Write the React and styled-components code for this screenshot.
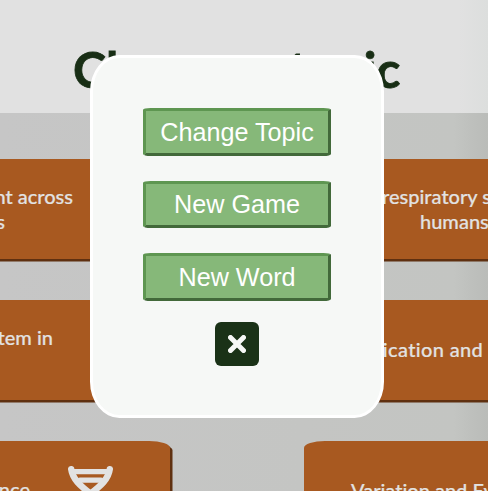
import React from 'react';
import styled, { createGlobalStyle } from 'styled-components';

const GlobalStyle = createGlobalStyle`
  * { box-sizing: border-box; }
  body { margin: 0; overflow: hidden; }
`;

const Page = styled.div`
  height: 491px;
  overflow: hidden;
  font-family: Lato, 'Open Sans', sans-serif;
  font-variant-ligatures: none;
  background: linear-gradient(90deg, #c6c6c6 0%, #c4c5c3 62%, #c3c5c2 93%, #bcbebb 98%, #babcb9 100%);
`;

const Header = styled.header`
  height: 113px;
  padding-top: 39px;
  padding-left: 73px;
  background: linear-gradient(90deg, #e1e1e1 0%, #e1e1e1 94%, #dcdedd 100%);
`;

const Title = styled.h1`
  margin: 0;
  color: #182e15;
  font-size: 50px;
  line-height: 60px;
  font-weight: 700;
  letter-spacing: -0.15px;
  white-space: nowrap;
  -webkit-text-stroke: 0.8px #182e15;
`;

const Topics = styled.main`
  display: grid;
  grid-template-columns: 300px 300px;
  grid-auto-rows: 100px;
  gap: 41px 134px;
  margin: 46px 0 0 -130px;
`;

const Topic = styled.article`
  display: flex;
  flex-direction: column;
  align-items: ${({ $side }) => ($side === 'left' ? 'flex-end' : 'flex-start')};
  padding-top: ${({ $top }) => $top}px;
  background: #a85920;
  border-radius: 7%;
  box-shadow: 2.5px 2.5px 0 #5f3010;
  color: #e2e2e2;
`;

const Line = styled.span`
  font-size: 20px;
  line-height: 25px;
  font-weight: 500;
  white-space: nowrap;
  letter-spacing: ${({ $track = 0 }) => $track}px;
  margin: ${({ $left = 0, $right = 0 }) => `0 ${$right}px 0 ${$left}px`};
  -webkit-text-stroke: 0.2px #e2e2e2;
`;

const IconRow = styled.div`
  display: flex;
  align-items: flex-start;
  gap: 38px;
  margin-right: 57px;
`;

const IconLabel = styled(Line)`
  margin-top: 12px;
`;

const Dna = styled.svg`
  display: block;
  width: 45px;
  height: 60px;
`;

const Dialog = styled.section`
  position: fixed;
  left: 90px;
  top: 55px;
  width: 294px;
  height: 363px;
  padding-top: 50px;
  display: flex;
  flex-direction: column;
  align-items: center;
  background: #f6f8f6;
  border: 3px solid #fff;
  border-radius: 10%;
`;

const Actions = styled.div`
  display: flex;
  flex-direction: column;
  gap: 25px;
`;

const Action = styled.button`
  width: 188px;
  height: 47.6px;
  padding: 0;
  background: #86b879;
  border: 3px solid;
  border-color: #5e9651 #42693a #42693a #5e9651;
  border-radius: 4%;
  color: #fff;
  font: 25.2px/36px 'Liberation Sans', Arial, sans-serif;
`;

const Close = styled.button`
  display: grid;
  place-items: center;
  width: 44px;
  height: 44px;
  margin-top: 21px;
  padding: 0;
  border: 0;
  border-radius: 6px;
  background: #1a3217;
`;

export default function App() {
  return (
    <Page>
      <GlobalStyle />
      <Header><Title>Choose a topic</Title></Header>
      <Topics>
        <Topic $side="left" $top={25}>
          <Line $right={97}>Movement across</Line>
          <Line $right={165}>membranes</Line>
        </Topic>
        <Topic $side="right" $top={25}>
          <Line $left={78}>respiratory system in</Line>
          <Line $left={116}>humans</Line>
        </Topic>
        <Topic $side="left" $top={25}>
          <Line $right={117}>Digestive system in</Line>
        </Topic>
        <Topic $side="right" $top={37}>
          <Line $left={19} $track={0.35}>Classification and</Line>
        </Topic>
        <Topic $side="left" $top={24}>
          <IconRow>
            <IconLabel>Inheritance</IconLabel>
            <Dna viewBox="0 0 45 60" fill="none" stroke="#e2e2e2" strokeLinecap="round">
              <path d="M3.2 4.2C4.5 14 12 21 22.5 28.5C33 36 41.8 43 41.8 57M41.8 4.2C40.5 14 33 21 22.5 28.5C12 36 3.2 43 3.2 57" strokeWidth="6.4" />
              <path d="M5 6.7H40M12 15.2H33" strokeWidth="5.2" />
            </Dna>
          </IconRow>
        </Topic>
        <Topic $side="right" $top={37}>
          <Line $left={47}>Variation and Evolution</Line>
        </Topic>
      </Topics>
      <Dialog role="dialog">
        <Actions>
          <Action>Change Topic</Action>
          <Action>New Game</Action>
          <Action>New Word</Action>
        </Actions>
        <Close aria-label="Close">
          <svg width="18" height="18" viewBox="0 0 18 18">
            <path d="M2.5 2.5L15.5 15.5M15.5 2.5L2.5 15.5" stroke="#f6f8f6" strokeWidth="5" strokeLinecap="round" />
          </svg>
        </Close>
      </Dialog>
    </Page>
  );
}
